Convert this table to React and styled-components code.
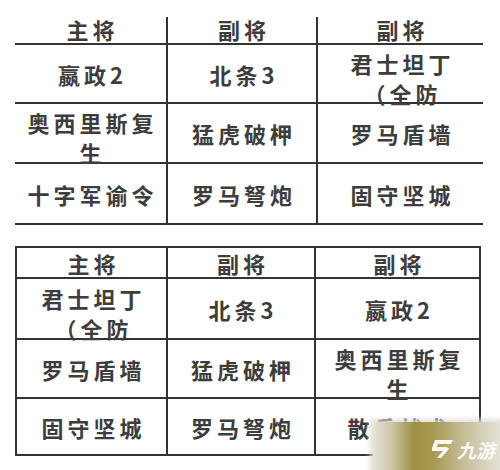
import React from 'react';
import styled, { createGlobalStyle } from 'styled-components';

const GlobalStyle = createGlobalStyle`
  html, body {
    margin: 0;
    padding: 0;
    background: #fff;
  }
  body {
    font-family: "Noto Sans CJK SC", "Noto Sans", sans-serif;
  }
`;

const Page = styled.div`
  position: relative;
  width: 500px;
  height: 470px;
  overflow: hidden;
  padding: 17px 0 0 15px;
  box-sizing: border-box;
  display: flex;
  flex-direction: column;
  gap: 21px;
`;

const Table = styled.div`
  display: grid;
  grid-template-columns: ${({ cols }) => cols};
  grid-template-rows: ${({ rows }) => rows};
  width: max-content;
  border: ${({ boxed }) => (boxed ? '2px solid #333' : 'none')};
  border-bottom: none;
`;

const Cell = styled.div`
  box-sizing: border-box;
  display: flex;
  justify-content: center;
  align-items: ${({ head, boxed }) => (head && !boxed ? 'flex-end' : 'center')};
  text-align: center;
  border-bottom: 2px solid #333;
  border-right: ${({ last }) => (last ? 'none' : '2px solid #333')};
  color: #3d3d3d;
  font-size: 22px;
  font-weight: 700;
  letter-spacing: 4px;
  line-height: 28px;
  padding: 0 4px 0 8px;
  white-space: nowrap;
`;

const Lines = styled.span`
  display: block;
  line-height: 30px;
  position: relative;
  top: ${({ shift }) => shift || 0}px;
`;

const Watermark = styled.div`
  position: absolute;
  left: 373px;
  top: 422px;
  width: 135px;
  height: 54px;
  display: flex;
  align-items: center;
  gap: 3px;
  padding-left: 56px;
  box-sizing: border-box;
  background: #a89a52;
  box-shadow: 0 0 5px 3px rgba(225, 222, 210, 0.9);
  color: #fbfaf4;
  font-size: 19px;
  font-weight: 700;
  font-style: italic;
`;

const Fade = styled.div`
  position: absolute;
  inset: 0;
  background: linear-gradient(90deg,
    #e6e4dc 0%,
    rgba(230, 228, 220, 0.6) 14%,
    rgba(150, 135, 50, 0.5) 30%,
    rgba(168, 154, 82, 0) 45%,
    rgba(215, 210, 195, 0.7) 70%,
    #ebe9e4 100%);
`;

const LogoMark = styled.svg`
  position: relative;
  flex: none;
  fill: #fbfaf4;
`;

const LogoText = styled.span`
  position: relative;
`;

const table1 = [
  ['主将', '副将', '副将'],
  ['嬴政2', '北条3', ['君士坦丁', '（全防']],
  [['奥西里斯复', '生'], '猛虎破柙', '罗马盾墙'],
  ['十字军谕令', '罗马弩炮', '固守坚城'],
];

const table2 = [
  ['主将', '副将', '副将'],
  [['君士坦丁', '（全防'], '北条3', '嬴政2'],
  ['罗马盾墙', '猛虎破柙', ['奥西里斯复', '生']],
  ['固守坚城', '罗马弩炮', '散兵战术'],
];

const renderText = (text) => (Array.isArray(text)
  ? <Lines shift={4}>{text.map((t) => <div key={t}>{t}</div>)}</Lines>
  : text);

const DataTable = ({ rows, cols, heights, boxed }) => (
  <Table cols={cols} rows={heights} boxed={boxed}>
    {rows.map((row, r) => row.map((text, c) => (
      <Cell
        key={`${r}-${c}`}
        head={r === 0}
        boxed={boxed}
        last={c === row.length - 1}
      >
        {renderText(text)}
      </Cell>
    )))}
  </Table>
);

export default function App() {
  return (
    <>
      <GlobalStyle />
      <Page>
        <DataTable
          rows={table1}
          cols="153px 150px 165px"
          heights="28px 59px 60px 61px"
        />
        <DataTable
          rows={table2}
          boxed
          cols="151px 148px 163px"
          heights="31px 61px 59px 57px"
        />
        <Watermark>
          <Fade />
          <LogoMark width="25" height="20" viewBox="0 0 25 20">
            <path d="M6 1 L24 1 L22 5 L9 5 L8 8 L18 8 L20 10 L12 19 L8 19 L14 12 L3 12 L3 9 Z" />
          </LogoMark>
          <LogoText>九游</LogoText>
        </Watermark>
      </Page>
    </>
  );
}
